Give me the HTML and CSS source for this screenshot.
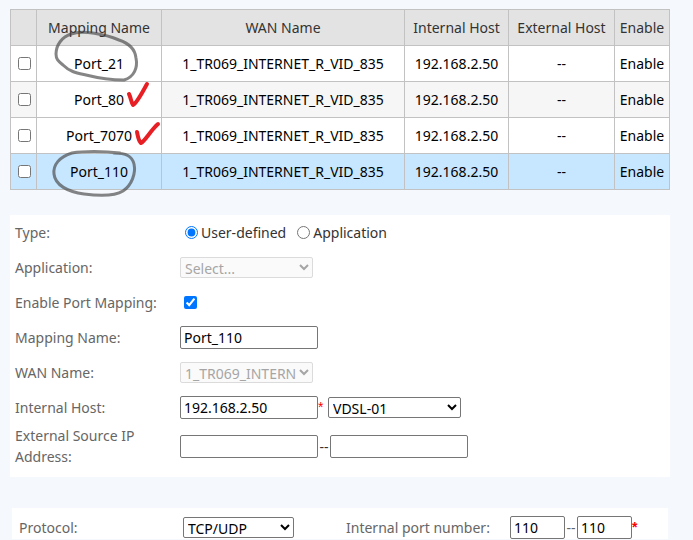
FILE: index.html
```html
<!DOCTYPE html>
<html lang="en">
<head>
<meta charset="utf-8">
<title>Port Mapping</title>
<link rel="stylesheet" href="styles.css">
</head>
<body>
<main class="page">
  <section class="mappings">
    <table class="grid">
      <colgroup>
        <col class="col-check"><col class="col-name"><col><col class="col-internal"><col class="col-external"><col class="col-enable">
      </colgroup>
      <thead>
        <tr><th></th><th>Mapping Name</th><th>WAN Name</th><th>Internal Host</th><th>External Host</th><th>Enable</th></tr>
      </thead>
      <tbody>
        <tr><td class="pick"><input class="tick" type="checkbox" aria-label="Port_21"></td><td>Port_21</td><td>1_TR069_INTERNET_R_VID_835</td><td>192.168.2.50</td><td>--</td><td>Enable</td></tr>
        <tr class="alt"><td class="pick"><input class="tick" type="checkbox" aria-label="Port_80"></td><td class="plain">Port_80</td><td>1_TR069_INTERNET_R_VID_835</td><td>192.168.2.50</td><td>--</td><td>Enable</td></tr>
        <tr><td class="pick"><input class="tick" type="checkbox" aria-label="Port_7070"></td><td>Port_7070</td><td>1_TR069_INTERNET_R_VID_835</td><td>192.168.2.50</td><td>--</td><td>Enable</td></tr>
        <tr class="selected"><td class="pick"><input class="tick" type="checkbox" aria-label="Port_110"></td><td>Port_110</td><td>1_TR069_INTERNET_R_VID_835</td><td>192.168.2.50</td><td>--</td><td>Enable</td></tr>
      </tbody>
    </table>
    <svg class="marks" width="170" height="200" viewBox="0 0 170 200" aria-hidden="true">
      <g class="pencil">
        <path d="M71 34C62 37 56 45 56 54C56 59 58 61 63 65C70 72 77 73 86 75C98 78 113 80 124 80C134 77 138 68 136 58C135 48 128 43 119 40C105 34 83 30 71 34Z"/>
        <path d="M120 153C104 151 83 151 72 153C59 157 53 165 54 174C55 185 68 192 84 194C99 196 115 196 123 191C132 185 136 173 134 164C132 156 126 153 114 153"/>
      </g>
      <g class="red">
        <path d="M129 94C131 98 131 102 133 105C137 103 142 93 147 84"/>
        <path d="M137 132C138 136 138 140 141 143C145 141 151 130 158 124"/>
      </g>
    </svg>
  </section>

  <form class="settings">
    <div class="row"><span class="label">Type:</span>
      <div class="field"><input class="dot" id="user" type="radio" name="type" checked><label class="choice" for="user">User-defined</label><input class="dot" id="app" type="radio" name="type"><label for="app">Application</label></div></div>
    <div class="row"><label class="label" for="application">Application:</label>
      <div class="field"><select class="wide" id="application" disabled><option>Select...</option></select></div></div>
    <div class="row"><label class="label" for="enabled">Enable Port Mapping:</label>
      <div class="field"><input class="tick" id="enabled" type="checkbox" checked></div></div>
    <div class="row"><label class="label" for="name">Mapping Name:</label>
      <div class="field"><input class="text" id="name" type="text" value="Port_110"></div></div>
    <div class="row"><label class="label" for="wan">WAN Name:</label>
      <div class="field"><select class="wide" id="wan" disabled><option>1_TR069_INTERNET_R_VID_835</option></select></div></div>
    <div class="row"><label class="label" for="host">Internal Host:</label>
      <div class="field"><input class="text" id="host" type="text" value="192.168.2.50"><span class="star">*</span><select class="wide" aria-label="Host device"><option>VDSL-01</option></select></div></div>
    <div class="row tall"><label class="label" for="source">External Source IP Address:</label>
      <div class="field"><input class="text" id="source" type="text"><span class="dash">--</span><input class="text" type="text" aria-label="Last source IP address"></div></div>
  </form>

  <form class="ports">
    <label class="protocol" for="protocol">Protocol:</label>
    <select class="short" id="protocol"><option>TCP/UDP</option></select>
    <label class="number" for="port">Internal port number:</label>
    <div class="field"><input class="port" id="port" type="text" value="110"><span class="dash">--</span><input class="port" type="text" value="110" aria-label="Last internal port"><b class="star">*</b></div>
  </form>
</main>
</body>
</html>
```
FILE: styles.css
```css
* { box-sizing: border-box; }
body {
  margin: 0;
  background: #f5f8fd;
  color: #333;
  font: 14px/21px "Noto Sans", "Open Sans", sans-serif;
}
.page { padding: 9px 23px 0 10px; }
.mappings { position: relative; }

.grid {
  width: 100%;
  table-layout: fixed;
  border-collapse: collapse;
  background: #fff;
  color: #000;
}
.grid th, .grid td {
  height: 36px;
  padding: 0;
  border: 1px solid #c2c2c2;
  text-align: center;
  font-weight: 400;
  white-space: nowrap;
}
.grid th { background: #e3e3e3; color: #333; }
.grid .alt { background: #f6f6f6; }
.grid .plain { background: #fff; }
.grid .selected { background: #c7e6ff; }
.grid .pick { padding-left: 2px; }
.grid .tick { display: block; margin: 0 auto; }
.col-check { width: 26px; }
.col-name { width: 125px; }
.col-internal { width: 104px; }
.col-external { width: 106px; }
.col-enable { width: 55px; }

.marks { position: absolute; left: -10px; top: -9px; pointer-events: none; }
.marks path { fill: none; stroke-linecap: round; stroke-linejoin: round; }
.pencil { stroke: #444; stroke-opacity: .65; stroke-width: 3; }
.red { stroke: #e71f24; stroke-width: 4; }

.tick, .dot { width: 13px; height: 13px; margin: 0 3px 0 4px; flex: none; }
.dot { margin-left: 5px; }

.settings {
  margin-top: 25px;
  padding: 0 5px 10px;
  background: #fff;
}
.row { display: flex; align-items: center; height: 35px; }
.tall { height: 42px; }
.label { width: 165px; padding-right: 20px; color: #666; flex: none; white-space: nowrap; }
.tall .label { white-space: normal; }
.field { display: flex; align-items: center; }
.choice { margin-right: 6px; }

input, select { font: 14px "Noto Sans", "Open Sans", sans-serif; margin: 0; }
.text, .port {
  height: 23px;
  padding: 1px 3px;
  border: 1px solid #767676;
  border-radius: 2px;
}
.text { width: 138px; }
.port { width: 55px; }
select {
  height: 21px;
  padding: 0;
  border: 1px solid #767676;
  border-radius: 2px;
  background-color: #fff;
}
select:disabled { background-color: #f8f8f8; border-color: #ccc; }
.wide { width: 133px; }
.short { width: 111px; }
.star { width: 10px; color: #f00; font-family: "Liberation Sans", sans-serif; }
.dash { width: 12px; text-align: center; }

.ports {
  display: flex;
  align-items: center;
  margin: 31px 2px 0;
  padding: 8px 7px 0;
  background: #fff;
  color: #666;
}
.protocol { width: 164px; flex: none; }
.number { width: 164px; margin-left: 52px; flex: none; }
```
